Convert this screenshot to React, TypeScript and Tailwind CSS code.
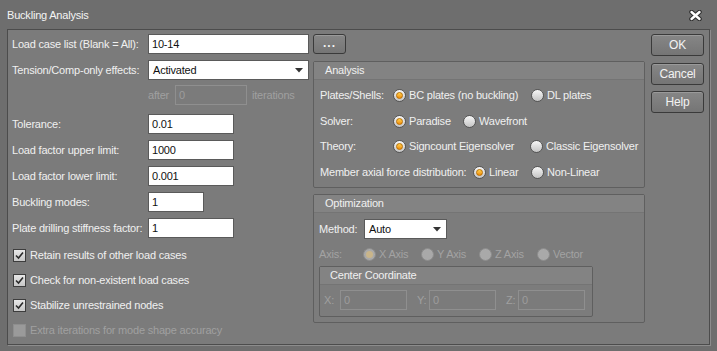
import React from 'react';

const font = { fontFamily: '"Liberation Sans", Arial, sans-serif' };

const Radio: React.FC<{ checked?: boolean; disabled?: boolean }> = ({ checked, disabled }) => (
  <span
    className={`relative inline-flex h-[13px] w-[13px] shrink-0 items-center justify-center rounded-full border ${
      disabled ? 'border-[#8c8c8c] bg-[#a9a9a9]' : 'border-[#555] bg-gradient-to-b from-[#f6f6f6] to-[#c4c4c4]'
    }`}
  >
    {checked && (
      <span
        className={`h-[7px] w-[7px] rounded-full ${
          disabled ? 'bg-[#c9b58a]' : 'border border-[#b86e00] bg-gradient-to-b from-[#ffd24a] to-[#f08c00]'
        }`}
      />
    )}
  </span>
);

const Checkbox: React.FC<{ checked?: boolean; disabled?: boolean }> = ({ checked, disabled }) => (
  <span
    className={`inline-flex h-[13px] w-[13px] shrink-0 items-center justify-center border ${
      disabled ? 'border-[#8e8e8e] bg-[#9a9a9a]' : 'border-[#3d3d3d] bg-gradient-to-b from-[#e8e8e8] to-[#c6c6c6]'
    }`}
  >
    {checked && (
      <svg width="9" height="9" viewBox="0 0 9 9">
        <path d="M1 4.5 L3.5 7 L8 1.5" fill="none" stroke="#2a2a2a" strokeWidth="1.6" />
      </svg>
    )}
  </span>
);

const TextBox: React.FC<{ value: string; w: string; disabled?: boolean }> = ({ value, w, disabled }) => (
  <div
    className={`flex h-[20px] items-center border px-[3px] ${w} ${
      disabled ? 'border-[#8f8f8f] bg-[#7b7b7b] text-[#9d9d9d]' : 'border-[#5a5a5a] bg-white text-[#111]'
    }`}
  >
    {value}
  </div>
);

const Arrow = () => (
  <svg width="8" height="5" viewBox="0 0 8 5">
    <path d="M0 0 H8 L4 4.5 Z" fill="#333" />
  </svg>
);

const Select: React.FC<{ value: string; w: string }> = ({ value, w }) => (
  <div className={`flex h-[20px] items-center justify-between border border-[#5a5a5a] bg-white pl-[4px] pr-[5px] text-[#111] ${w}`}>
    <span>{value}</span>
    <Arrow />
  </div>
);

const Btn: React.FC<{ children: React.ReactNode; className?: string }> = ({ children, className }) => (
  <div
    className={`flex items-center justify-center rounded-[3px] border border-[#3a3a3a] bg-gradient-to-b from-[#868686] to-[#757575] text-[#f2f2f2] shadow-[inset_0_1px_0_#9a9a9a] ${className ?? ''}`}
  >
    {children}
  </div>
);

const Group: React.FC<{ title: string; className?: string; children: React.ReactNode }> = ({ title, className, children }) => (
  <div className={`flex flex-col rounded-[2px] border border-[#5f5f5f] bg-[#7c7c7c] ${className ?? ''}`}>
    <div className="flex h-[18px] items-center border-b border-[#747474] bg-[#838383] pl-[11px] text-[#f0f0f0]">{title}</div>
    {children}
  </div>
);

const Opt: React.FC<{ label: string; checked?: boolean; disabled?: boolean; w?: string }> = ({ label, checked, disabled, w }) => (
  <div className={`flex items-center gap-[3px] whitespace-nowrap ${w ?? ''}`}>
    <Radio checked={checked} disabled={disabled} />
    <span className={disabled ? 'text-[#a3a3a3]' : ''}>{label}</span>
  </div>
);

const Row: React.FC<{ label: string; mt: string; children: React.ReactNode }> = ({ label, mt, children }) => (
  <div className={`flex h-[20px] items-center ${mt}`}>
    <span className="w-[136px] shrink-0 whitespace-nowrap">{label}</span>
    {children}
  </div>
);

const Check: React.FC<{ label: string; mt: string; checked?: boolean; disabled?: boolean }> = ({ label, mt, checked, disabled }) => (
  <div className={`flex h-[20px] items-center gap-[4px] whitespace-nowrap pl-[1px] ${mt}`}>
    <Checkbox checked={checked} disabled={disabled} />
    <span className={disabled ? 'text-[#a0a0a0]' : ''}>{label}</span>
  </div>
);

export default function App() {
  return (
    <div className="relative h-[351px] w-[717px] bg-[#6e6e6e] text-[11px] tracking-[-0.2px] text-[#f0f0f0]" style={font}>
      <div className="flex h-[29px] items-center justify-between pl-[7px] pr-[15px] pt-[1px] text-[11px] text-[#f4f4f4]">
        <span>Buckling Analysis</span>
        <svg width="13" height="11" viewBox="0 0 13 11">
          <path d="M2.5 2 L10.5 9 M10.5 2 L2.5 9" stroke="#2e2e2e" strokeWidth="4.5" strokeLinecap="round" />
          <path d="M2.5 2 L10.5 9 M10.5 2 L2.5 9" stroke="#ffffff" strokeWidth="2.4" strokeLinecap="round" />
        </svg>
      </div>

      <div className="ml-[7px] flex h-[316px] w-[703px] border border-[#4c4c4c] bg-[#7b7b7b] pl-[4px] pr-[5px] pt-[4px] shadow-[1px_1px_0_#8c8c8c]">
        {/* left column */}
        <div className="flex w-[297px] shrink-0 flex-col">
          <Row label="Load case list (Blank = All):" mt="">
            <TextBox value="10-14" w="w-[161px]" />
          </Row>
          <Row label="Tension/Comp-only effects:" mt="mt-[6px]">
            <Select value="Activated" w="w-[161px]" />
          </Row>
          <div className="mt-[5px] flex h-[20px] items-center pl-[136px] text-[#a0a0a0]">
            <span className="w-[27px]">after</span>
            <TextBox value="0" w="w-[72px]" disabled />
            <span className="ml-[5px]">iterations</span>
          </div>
          <Row label="Tolerance:" mt="mt-[9px]">
            <TextBox value="0.01" w="w-[86px]" />
          </Row>
          <Row label="Load factor upper limit:" mt="mt-[6px]">
            <TextBox value="1000" w="w-[86px]" />
          </Row>
          <Row label="Load factor lower limit:" mt="mt-[6px]">
            <TextBox value="0.001" w="w-[86px]" />
          </Row>
          <Row label="Buckling modes:" mt="mt-[6px]">
            <TextBox value="1" w="w-[56px]" />
          </Row>
          <Row label="Plate drilling stiffness factor:" mt="mt-[6px]">
            <TextBox value="1" w="w-[86px]" />
          </Row>
          <Check label="Retain results of other load cases" mt="mt-[7px]" checked />
          <Check label="Check for non-existent load cases" mt="mt-[5px]" checked />
          <Check label="Stabilize unrestrained nodes" mt="mt-[5px]" checked />
          <Check label="Extra iterations for mode shape accuracy" mt="mt-[5px]" disabled />
        </div>

        {/* middle column */}
        <div className="ml-[4px] flex w-[332px] shrink-0 flex-col">
          <Btn className="h-[20px] w-[33px] pb-[3px] text-[12px] font-bold tracking-[1px]">...</Btn>

          <Group title="Analysis" className="mt-[7px] h-[127px]">
            <div className="flex flex-col pl-[6px]">
              <div className="mt-[5px] flex h-[20px] items-center">
                <span className="w-[73px]">Plates/Shells:</span>
                <Opt label="BC plates (no buckling)" checked w="w-[138px]" />
                <Opt label="DL plates" />
              </div>
              <div className="mt-[6px] flex h-[20px] items-center">
                <span className="w-[73px]">Solver:</span>
                <Opt label="Paradise" checked w="w-[70px]" />
                <Opt label="Wavefront" />
              </div>
              <div className="mt-[5px] flex h-[20px] items-center">
                <span className="w-[73px]">Theory:</span>
                <Opt label="Signcount Eigensolver" checked w="w-[137px]" />
                <Opt label="Classic Eigensolver" />
              </div>
              <div className="mt-[6px] flex h-[20px] items-center">
                <span className="w-[153px] whitespace-nowrap">Member axial force distribution:</span>
                <Opt label="Linear" checked w="w-[58px]" />
                <Opt label="Non-Linear" />
              </div>
            </div>
          </Group>

          <Group title="Optimization" className="mt-[6px] h-[129px]">
            <div className="flex flex-col pl-[5px]">
              <div className="mt-[6px] flex h-[20px] items-center">
                <span className="w-[45px]">Method:</span>
                <Select value="Auto" w="w-[83px]" />
              </div>
              <div className="mt-[5px] flex h-[20px] items-center text-[#a3a3a3]">
                <span className="w-[44px]">Axis:</span>
                <Opt label="X Axis" checked disabled w="w-[58px]" />
                <Opt label="Y Axis" disabled w="w-[58px]" />
                <Opt label="Z Axis" disabled w="w-[58px]" />
                <Opt label="Vector" disabled />
              </div>
              <div className="mt-[2px] flex h-[51px] w-[274px] flex-col rounded-[2px] border border-[#5f5f5f] bg-[#7c7c7c]">
                <div className="flex h-[18px] items-center border-b border-[#747474] bg-[#838383] pl-[10px] text-[#f0f0f0]">Center Coordinate</div>
                <div className="mt-[5px] flex h-[20px] items-center pl-[4px] text-[#a0a0a0]">
                  <span className="w-[16px]">X:</span>
                  <TextBox value="0" w="w-[67px]" disabled />
                  <span className="ml-[10px] w-[12px]">Y:</span>
                  <TextBox value="0" w="w-[67px]" disabled />
                  <span className="ml-[10px] w-[12px]">Z:</span>
                  <TextBox value="0" w="w-[67px]" disabled />
                </div>
              </div>
            </div>
          </Group>
        </div>

        {/* right column */}
        <div className="ml-[6px] flex w-[53px] shrink-0 flex-col">
          <Btn className="h-[22px] text-[12px]">OK</Btn>
          <Btn className="mt-[7px] h-[22px] text-[12px]">Cancel</Btn>
          <Btn className="mt-[6px] h-[22px] text-[12px]">Help</Btn>
        </div>
      </div>
    </div>
  );
}
